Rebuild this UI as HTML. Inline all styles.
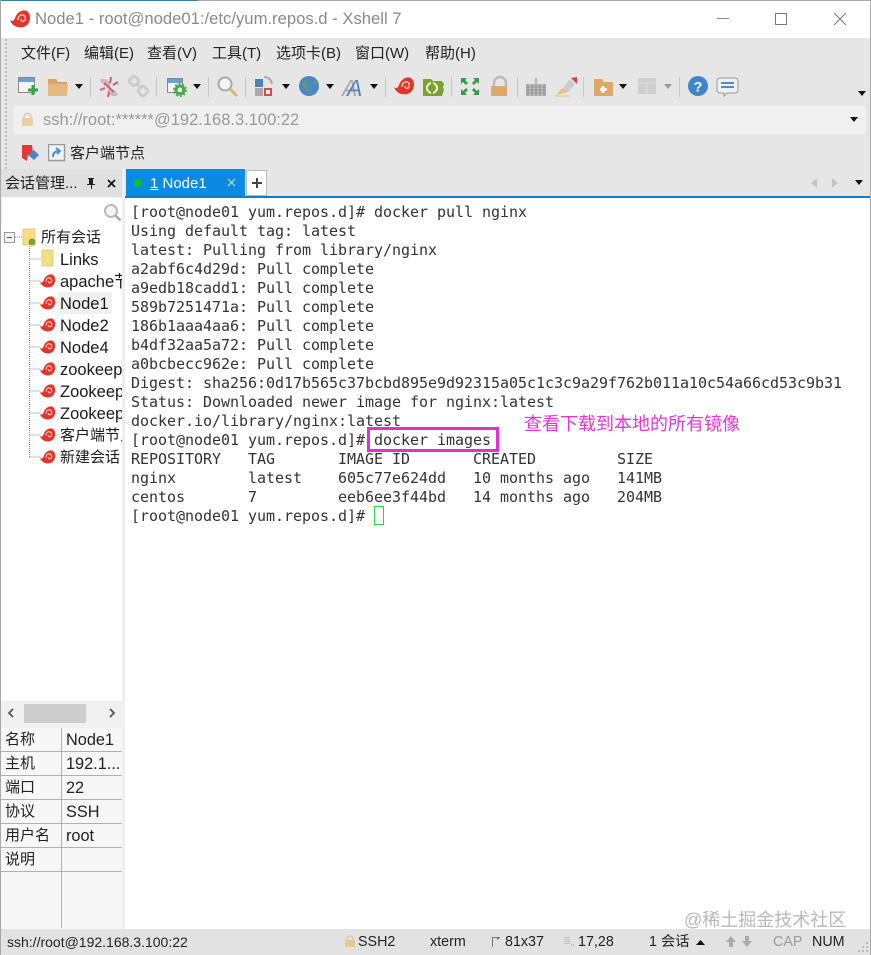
<!DOCTYPE html>
<html lang="zh"><head><meta charset="utf-8"><title>Xshell</title>
<style>
html,body{margin:0;padding:0;background:#fff}
#w{position:relative;width:871px;height:955px;overflow:hidden;background:#e6e6e6;font-family:"Liberation Sans","Noto Sans CJK SC",sans-serif;color:#111}
#w div,#w svg{position:absolute}
.t{white-space:nowrap;line-height:20px}
.m{font-size:15px;top:44px;color:#222}
pre{position:absolute;margin:0;left:131px;top:203px;font:15px/19px "DejaVu Sans Mono","Liberation Mono",monospace;color:#333;letter-spacing:-.03px}
.arr{width:0;height:0;border-left:4px solid transparent;border-right:4px solid transparent;border-top:5px solid #111}
.sep{width:1px;height:20px;background:#c8c8c8;top:77px}
.tree{font-size:16.500px;left:60px;color:#1a1a1a;white-space:nowrap;line-height:20px;width:62px;overflow:hidden}
.p{font-size:15px;line-height:20px;white-space:nowrap;color:#222}
.v{font-size:16.300px}
.ln{background:#b0b0b0;height:1px;left:1px;width:121px}
.s{font-size:14.300px;top:932px;line-height:20px;white-space:nowrap;color:#222}
</style></head><body><div id="w">
<svg width="0" height="0" style="position:absolute"><defs>
<symbol id="sn" viewBox="0 0 22 20"><path d="M1 11C3 13 5 12 6 9 8 3 14 0 18 2c4 3 4 10 0 14-3 3-9 3-12 1C4 16 2 14 1 11z" fill="#e5352b"/><path d="M9 11c0-3 2-6 5-5 3 1 3 5 1 6-2 1-3 0-3-2" fill="none" stroke="#fbd4cc" stroke-width="1.300"/></symbol>
</defs></svg>

<!-- title bar -->
<div style="left:0;top:0;width:871px;height:38px;background:#fff"></div>
<div style="left:0;top:0;width:198px;height:1px;background:#3a7ca5"></div>
<div style="left:198px;top:0;width:673px;height:1px;background:#aaa"></div>
<div style="left:0;top:0;width:1px;height:955px;background:#a8a8a8"></div>
<div style="left:870px;top:0;width:1px;height:955px;background:#a8a8a8"></div>
<svg style="left:9px;top:9px" width="22" height="20"><use href="#sn"/></svg>
<div class="t" style="left:35px;top:9px;font-size:16.650px;color:#8a8a8a">Node1 - root@node01:/etc/yum.repos.d - Xshell 7</div>
<div style="left:717px;top:18px;width:12px;height:1px;background:#888"></div>
<div style="left:775px;top:13px;width:10px;height:10px;border:1px solid #777"></div>
<svg style="left:833px;top:12px" width="14" height="14"><path d="M1 1L13 13M13 1L1 13" stroke="#777" fill="none"/></svg>

<!-- grip -->
<div style="left:5px;top:39px;width:2px;height:130px;border-left:2px dotted #bbb"></div>

<!-- menu -->
<div class="t m" style="left:21px">文件(F)</div>
<div class="t m" style="left:84px">编辑(E)</div>
<div class="t m" style="left:147px">查看(V)</div>
<div class="t m" style="left:212px">工具(T)</div>
<div class="t m" style="left:276px">选项卡(B)</div>
<div class="t m" style="left:355px">窗口(W)</div>
<div class="t m" style="left:425px">帮助(H)</div>

<!-- toolbar -->
<svg style="left:0;top:70px" width="871" height="36">
<rect x="18.500" y="7.500" width="16" height="15" fill="#f4f4f4" stroke="#888"/><rect x="19" y="8" width="15" height="4" fill="#6a9fd8"/><path d="M33 15v10M28 20h10" stroke="#2fa84a" stroke-width="3"/>
<path d="M48 9h8l2 3h9v4H48z" fill="#d4a564"/><path d="M48 14h20l-1 12H48z" fill="#e2b97e"/>
<path d="M101 9h5l5 5-2 3-6-3-3-3zM117 26h-5l-5-5 2-3 6 3 3 3z" fill="#c0c0c0"/><path d="M111 7l-1 6M118 12l-5 3M100 20l5-2M108 27l1-5M104 13l10 9" stroke="#e5536b" stroke-width="2"/>
<rect x="130" y="7" width="8" height="8" rx="2" transform="rotate(45 134 11)" fill="none" stroke="#ccc" stroke-width="3"/><rect x="139" y="17" width="8" height="8" rx="2" transform="rotate(45 143 21)" fill="none" stroke="#ccc" stroke-width="3"/><path d="M137 14l4 4" stroke="#ccc" stroke-width="2.500"/>
<rect x="167.500" y="8.500" width="15" height="14" fill="#f4f4f4" stroke="#888"/><rect x="168" y="9" width="14" height="4" fill="#6a9fd8"/><circle cx="180" cy="20" r="4" fill="none" stroke="#4aa84e" stroke-width="3"/><circle cx="180" cy="20" r="6.300" fill="none" stroke="#4aa84e" stroke-width="1.500" stroke-dasharray="2 2"/>
<circle cx="225" cy="14" r="6.500" fill="#f4f4f4" stroke="#aaa" stroke-width="2"/><path d="M230 19l7 7" stroke="#d9b47a" stroke-width="3"/>
<rect x="255" y="9" width="8" height="8" fill="#4e80bd"/><rect x="255" y="18" width="8" height="8" fill="#aaa"/><rect x="265" y="19" width="6" height="6" fill="#fff" stroke="#e04848" stroke-width="2"/><path d="M264 7c4 0 7 2 8 7" stroke="#aaa" stroke-width="2" fill="none"/>
<circle cx="309" cy="16" r="10" fill="#4a86c8"/><path d="M303 10c4-1 5 2 3 4 3 1 2 5 5 6-1 2-3 3-4 1-1-3-4-3-5-6zM313 9c3 1 4 3 4 6-2 0-4-1-4-3z" fill="#5a9a78"/>
<text x="342" y="26" font-family="Liberation Sans" font-style="italic" font-size="23" fill="#aaa">A</text><text x="347" y="26" font-family="Liberation Sans" font-style="italic" font-size="23" fill="#4e86c8">A</text>
<use href="#sn" x="393" y="6" width="22" height="20"/>
<path d="M423 9h8l2 2h9l2 3-1 3 1 3-2 6h-19z" fill="#7aa32a"/><circle cx="432" cy="18" r="5" fill="none" stroke="#fff" stroke-width="1.800"/><path d="M432 12v12" stroke="#7aa32a" stroke-width="2"/>
<path d="M461 8h6l-2 2 3 3-2 2-3-3-2 2zM479 8h-6l2 2-3 3 2 2 3-3 2 2zM461 25h6l-2-2 3-3-2-2-3 3-2-2zM479 25h-6l2-2-3-3 2-2 3 3 2-2z" fill="#2f9e44"/>
<path d="M494 16v-3a6 6 0 0 1 12 0v3" fill="none" stroke="#bbb" stroke-width="2.500"/><rect x="491" y="16" width="16" height="10" rx="1" fill="#dfa868"/>
<rect x="526" y="14" width="20" height="12" fill="#aaa"/><path d="M536 8v6M527 17h18M527 20h18M527 23h18" stroke="#888"/><path d="M530 14v12M534 14v12M538 14v12M542 14v12" stroke="#ccc"/>
<path d="M561 20l9-11 5 5-8 9z" fill="#ccc"/><path d="M571 8l6-1v7z" fill="#d9433f"/><path d="M558 24l4-5 4 3zM555 26h15" stroke="#e8c27a" fill="#e8c27a"/>
<path d="M594 9h8l2 3h9v14h-19z" fill="#dfa868"/><path d="M603 16v7M600 19.500h7" stroke="#fff" stroke-width="2.500"/>
<rect x="638" y="8" width="18" height="16" fill="#cfcfcf"/><path d="M638 13h18M647 13v11" stroke="#ddd"/>
<circle cx="698" cy="16" r="10" fill="#4384c8"/><text x="698" y="21.500" text-anchor="middle" font-family="Liberation Sans" font-weight="bold" font-size="14" fill="#fff">?</text>
<path d="M720 8h15a3 3 0 0 1 3 3v9a3 3 0 0 1-3 3h-8l-3 3v-3h-4a3 3 0 0 1-3-3v-9a3 3 0 0 1 3-3z" fill="#f0f0f0" stroke="#999"/><path d="M721 13h13M721 17h13" stroke="#4e8ccb" stroke-width="2"/>
</svg>
<div class="arr" style="left:75px;top:84px"></div>
<div class="arr" style="left:193px;top:84px"></div>
<div class="arr" style="left:282px;top:84px"></div>
<div class="arr" style="left:326px;top:84px"></div>
<div class="arr" style="left:370px;top:84px"></div>
<div class="arr" style="left:619px;top:84px"></div>
<div class="arr" style="left:664px;top:84px;border-top-color:#999"></div>
<div class="arr" style="left:858px;top:91px"></div>
<div class="sep" style="left:90px"></div>
<div class="sep" style="left:156px"></div>
<div class="sep" style="left:208px"></div>
<div class="sep" style="left:245px"></div>
<div class="sep" style="left:385px"></div>
<div class="sep" style="left:451px"></div>
<div class="sep" style="left:517px"></div>
<div class="sep" style="left:583px"></div>
<div class="sep" style="left:679px"></div>

<!-- address bar -->
<div style="left:14px;top:106px;width:852px;height:28px;background:#f0f0f0;border-radius:2px"></div>
<svg style="left:20px;top:112px" width="15" height="15"><path d="M4 7V5a3.500 3.500 0 0 1 7 0v2" fill="none" stroke="#d8c8a8" stroke-width="1.500"/><rect x="2" y="6" width="11" height="8" rx="1" fill="#e8cf9c"/></svg>
<div class="t" style="left:43px;top:110px;font-size:16.500px;color:#999">ssh://root:******@192.168.3.100:22</div>
<div class="arr" style="left:850px;top:117px"></div>

<!-- links bar -->
<svg style="left:20px;top:143px" width="20" height="20"><path d="M2 2h10l1 8-5 2-1 6-5-3z" fill="#e0383e"/><path d="M8 12l6-5 5 5-5 5z" fill="#4a86c8"/></svg>
<svg style="left:48px;top:144px" width="18" height="18"><rect x=".5" y=".5" width="16" height="16" fill="#f4f4f4" stroke="#999" stroke-width="1.500"/><path d="M5 13c0-4 2-6 6-6M8 4l4 3-3 3" fill="none" stroke="#4a90d9" stroke-width="2"/></svg>
<div class="t" style="left:70px;top:144px;font-size:15px;color:#222">客户端节点</div>

<!-- left pane -->
<div style="left:1px;top:169px;width:121px;height:760px;background:#f6f6f6"></div>
<div style="left:1px;top:169px;width:121px;height:28px;background:#e0e0e0"></div>
<div class="t" style="left:5px;top:174px;font-size:15px;color:#222">会话管理...</div>
<svg style="left:85px;top:177px" width="12" height="13"><path d="M3 1h6v1H8v5h2v1H7v4H6V8H2V7h2V2H3z" fill="#222"/></svg>
<svg style="left:106px;top:178px" width="11" height="11"><path d="M2 2l7 7M9 2L2 9" stroke="#111" stroke-width="1.700"/></svg>
<div style="left:3px;top:198px;width:119px;height:26px;background:#fff"></div>
<svg style="left:103px;top:203px" width="19" height="19"><circle cx="8" cy="8" r="6" fill="#f4f4f4" stroke="#bbb" stroke-width="2"/><path d="M12.500 12.500l5 5" stroke="#aaa" stroke-width="2.500"/></svg>
<div style="left:1px;top:224px;width:121px;height:477px;background:#fff"></div>
<div style="left:58px;top:292px;width:54px;height:22px;background:#f0f0f0"></div>
<svg style="left:0;top:224px" width="60" height="240">
<path d="M29.500 20V233M15 13h7M29.500 35h12M29.500 57h12M29.500 79h12M29.500 101h12M29.500 123h12M29.500 145h12M29.500 167h12M29.500 189h12M29.500 211h12M29.500 233h12" stroke="#888" stroke-dasharray="1 1" fill="none"/>
<rect x="4.500" y="8.500" width="10" height="10" fill="#f2f2f2" stroke="#999"/><path d="M7 13.500h5" stroke="#555"/>
<path d="M23 5h12v16H23z" fill="#f7dd84" stroke="#e4cc80"/><circle cx="32" cy="18" r="3.500" fill="#7aa32a"/>
<path d="M42 26h11v16H42z" fill="#f7dd84" stroke="#e4cc80"/>
<use href="#sn" x="39" y="49" width="17" height="16"/>
<use href="#sn" x="39" y="71" width="17" height="16"/>
<use href="#sn" x="39" y="93" width="17" height="16"/>
<use href="#sn" x="39" y="115" width="17" height="16"/>
<use href="#sn" x="39" y="137" width="17" height="16"/>
<use href="#sn" x="39" y="159" width="17" height="16"/>
<use href="#sn" x="39" y="181" width="17" height="16"/>
<use href="#sn" x="39" y="203" width="17" height="16"/>
<use href="#sn" x="39" y="225" width="17" height="16"/>
</svg>
<div class="t" style="left:41px;top:228px;font-size:15px;color:#222">所有会话</div>
<div class="tree" style="top:250px">Links</div>
<div class="tree" style="top:272px">apache节点</div>
<div class="tree" style="top:294px">Node1</div>
<div class="tree" style="top:316px">Node2</div>
<div class="tree" style="top:338px">Node4</div>
<div class="tree" style="top:360px">zookeeper</div>
<div class="tree" style="top:382px">Zookeeper</div>
<div class="tree" style="top:404px">Zookeeper</div>
<div class="tree" style="top:426px;font-size:15px">客户端节点</div>
<div class="tree" style="top:448px;font-size:15px">新建会话</div>
<!-- scrollbar -->
<div style="left:1px;top:701px;width:121px;height:27px;background:#f0f0f0"></div>
<div style="left:24px;top:704px;width:62px;height:19px;background:#cdcdcd"></div>
<svg style="left:6px;top:707px" width="10" height="12"><path d="M7 2L3 6l4 4" fill="none" stroke="#555" stroke-width="1.800"/></svg>
<svg style="left:107px;top:707px" width="10" height="12"><path d="M3 2l4 4-4 4" fill="none" stroke="#555" stroke-width="1.800"/></svg>
<!-- properties -->
<div style="left:1px;top:728px;width:121px;height:200px;background:#f7f7f7"></div>
<div class="ln" style="top:751px"></div><div class="ln" style="top:775px"></div><div class="ln" style="top:799px"></div><div class="ln" style="top:823px"></div><div class="ln" style="top:847px"></div><div class="ln" style="top:871px"></div>
<div style="left:61px;top:728px;width:1px;height:200px;background:#b0b0b0"></div>
<div class="p" style="left:5px;top:730px">名称</div><div class="p v" style="left:66px;top:730px">Node1</div>
<div class="p" style="left:5px;top:754px">主机</div><div class="p v" style="left:66px;top:754px">192.1...</div>
<div class="p" style="left:5px;top:778px">端口</div><div class="p v" style="left:66px;top:778px">22</div>
<div class="p" style="left:5px;top:802px">协议</div><div class="p v" style="left:66px;top:802px">SSH</div>
<div class="p" style="left:5px;top:826px">用户名</div><div class="p v" style="left:66px;top:826px">root</div>
<div class="p" style="left:5px;top:850px">说明</div>
<div style="left:122px;top:169px;width:3px;height:760px;background:#efefef"></div>

<!-- tab bar -->
<div style="left:126px;top:169px;width:119px;height:27px;background:#0a8ae0"></div>
<div style="left:134px;top:179px;width:8px;height:8px;border-radius:50%;background:#0dc22e"></div>
<div class="t" style="left:150px;top:174px;font-size:15px;color:#fff"><u>1</u> Node1</div>
<svg style="left:227px;top:178px" width="9" height="9"><path d="M1 1l7 7M8 1L1 8" stroke="#cfe6f8"/></svg>
<div style="left:246px;top:170px;width:21px;height:26px;background:#fff;border:1px solid #bbb;box-sizing:border-box"></div>
<svg style="left:251px;top:177px" width="12" height="12"><path d="M6 1v10M1 6h10" stroke="#444" stroke-width="2"/></svg>
<svg style="left:810px;top:176px" width="30" height="14"><path d="M7 2L1 7l6 5z" fill="#c4c4c4"/><path d="M22 2l6 5-6 5z" fill="#c4c4c4"/></svg>
<div class="arr" style="left:855px;top:180px"></div>
<div style="left:125px;top:196px;width:745px;height:2px;background:#0a7fcf"></div>

<!-- terminal -->
<div style="left:125px;top:198px;width:745px;height:731px;background:#fff"></div>
<pre>[root@node01 yum.repos.d]# docker pull nginx
Using default tag: latest
latest: Pulling from library/nginx
a2abf6c4d29d: Pull complete
a9edb18cadd1: Pull complete
589b7251471a: Pull complete
186b1aaa4aa6: Pull complete
b4df32aa5a72: Pull complete
a0bcbecc962e: Pull complete
Digest: sha256:0d17b565c37bcbd895e9d92315a05c1c3c9a29f762b011a10c54a66cd53c9b31
Status: Downloaded newer image for nginx:latest
docker.io/library/nginx:latest
[root@node01 yum.repos.d]# docker images
REPOSITORY   TAG       IMAGE ID       CREATED         SIZE
nginx        latest    605c77e624dd   10 months ago   141MB
centos       7         eeb6ee3f44bd   14 months ago   204MB
[root@node01 yum.repos.d]# </pre>
<div style="left:374px;top:506px;width:10px;height:19px;border:1px solid #2ed14a;box-sizing:border-box"></div>
<div style="left:367px;top:427px;width:132px;height:25px;border:3px solid #e030d0;box-sizing:border-box"></div>
<div class="t" style="left:524px;top:414px;font-size:18px;color:#e535d5">查看下载到本地的所有镜像</div>
<div class="t" style="left:684px;top:910px;font-size:18px;color:#b8b8b8">@稀土掘金技术社区</div>

<!-- status bar -->
<div style="left:1px;top:929px;width:869px;height:26px;background:#e2e2e2"></div>
<div class="s" style="left:7px;font-size:14px">ssh://root@192.168.3.100:22</div>
<svg style="left:344px;top:935px" width="12" height="13"><path d="M3 6V4a3 3 0 0 1 6 0v2" fill="none" stroke="#d8c8a8" stroke-width="1.500"/><rect x="1" y="5" width="10" height="7" rx="1" fill="#e8c88c"/></svg>
<div class="s" style="left:358px">SSH2</div>
<div class="s" style="left:430px">xterm</div>
<svg style="left:491px;top:936px" width="10" height="11"><path d="M1.500 11V1.500H9" fill="none" stroke="#777"/><path d="M6 1l3 1-3 2z" fill="#777"/></svg>
<div class="s" style="left:505px">81x37</div>
<svg style="left:564px;top:936px" width="11" height="11"><path d="M1 1v8M3 1v8M5 1v8M7 9h3" stroke="#999" stroke-dasharray="1 1"/></svg>
<div class="s" style="left:578px">17,28</div>
<div class="s" style="left:649px">1 会话</div>
<svg style="left:696px;top:939px" width="9" height="6"><path d="M0 6l4.500-5L9 6z" fill="#111"/></svg>
<svg style="left:725px;top:935px" width="30" height="13"><path d="M6 1l5 6H8v5H4V7H1zM22 12l5-6h-3V1h-4v5h-3z" fill="#aaa"/></svg>
<div class="s" style="left:773px;color:#9a9a9a">CAP</div>
<div class="s" style="left:812px">NUM</div>
<svg style="left:857px;top:941px" width="12" height="12"><path d="M9 1h2v2H9zM5 5h2v2H5zM9 5h2v2H9zM1 9h2v2H1zM5 9h2v2H5zM9 9h2v2H9z" fill="#bbb"/></svg>
</div></body></html>
